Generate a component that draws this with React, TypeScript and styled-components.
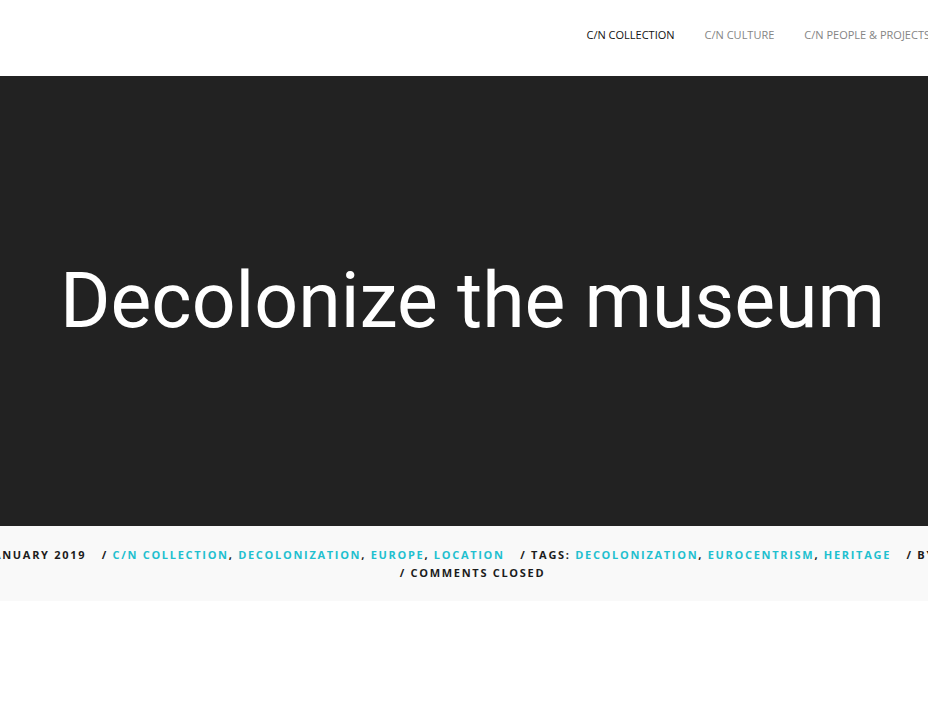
import React from "react";
import styled, { createGlobalStyle } from "styled-components";

const Global = createGlobalStyle`
  html, body { margin: 0; padding: 0; background: #fff; overflow: hidden; }
  body { font-family: "Open Sans", "Liberation Sans", sans-serif; }
`;

const Page = styled.div`
  width: 945px;
  display: flex;
  flex-direction: column;
`;

const Header = styled.header`
  height: 76px;
  display: flex;
  justify-content: flex-end;
  align-items: flex-start;
  background: #fff;
`;

const Nav = styled.nav`
  display: flex;
  padding-top: 28px;
`;

const NavItem = styled.a<{ $active?: boolean }>`
  padding: 0 15px;
  font-family: "Open Sans", sans-serif;
  font-size: 11px;
  line-height: 14px;
  color: ${(p) => (p.$active ? "#111" : "#858585")};
  text-decoration: none;
  white-space: nowrap;
`;

const Hero = styled.section`
  height: 450px;
  background: #222222;
  display: flex;
  align-items: center;
  justify-content: center;
`;

const Title = styled.h1`
  margin: 0;
  font-family: Roboto, "Noto Sans", sans-serif;
  font-weight: 400;
  font-size: 77px;
  line-height: 1;
  color: #fff;
  white-space: nowrap;
`;

const MetaBand = styled.section`
  height: 75px;
  background: #f9f9f9;
  box-sizing: border-box;
  padding-top: 20px;
  display: flex;
  flex-direction: column;
  align-items: center;
`;

const MetaLine = styled.div`
  display: flex;
  justify-content: center;
  width: 100%;
  white-space: nowrap;
  font-family: "Open Sans", sans-serif;
  font-weight: 700;
  font-size: 11px;
  line-height: 18px;
  letter-spacing: 1.7px;
  color: #1c1c1c;
  text-transform: uppercase;
`;

const MetaItem = styled.span<{ $first?: boolean }>`
  margin-left: ${(p) => (p.$first ? "0" : "15.5px")};
  flex: none;
`;

const TealLink = styled.a`
  color: #1fc0cf;
  text-decoration: none;
`;

const Below = styled.div`
  height: 105px;
  background: #fff;
`;

const Links = ({ items }: { items: string[] }) => (
  <>
    {items.map((t, i) => (
      <React.Fragment key={t}>
        <TealLink href="#">{t}</TealLink>
        {i < items.length - 1 ? ", " : ""}
      </React.Fragment>
    ))}
  </>
);

export default function App() {
  return (
    <>
      <Global />
      <Page>
        <Header>
          <Nav>
            <NavItem href="#" $active>C/N COLLECTION</NavItem>
            <NavItem href="#">C/N CULTURE</NavItem>
            <NavItem href="#">C/N PEOPLE &amp; PROJECTS</NavItem>
          </Nav>
        </Header>
        <Hero>
          <Title>Decolonize the museum</Title>
        </Hero>
        <MetaBand>
          <MetaLine>
            <MetaItem $first>22 January 2019</MetaItem>
            <MetaItem>
              / <Links items={["C/N Collection", "Decolonization", "Europe", "Location"]} />
            </MetaItem>
            <MetaItem>
              / Tags: <Links items={["Decolonization", "Eurocentrism", "Heritage"]} />
            </MetaItem>
            <MetaItem>/ By Anne</MetaItem>
          </MetaLine>
          <MetaLine>
            <MetaItem $first>/ Comments closed</MetaItem>
          </MetaLine>
        </MetaBand>
        <Below />
      </Page>
    </>
  );
}
